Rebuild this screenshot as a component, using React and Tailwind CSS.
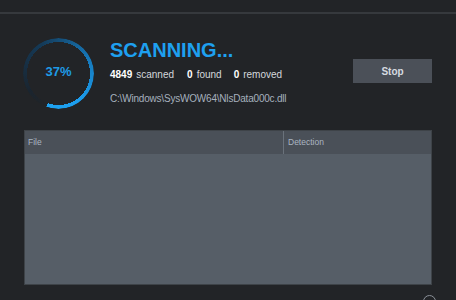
export default function App() {
  return (
    <div className="w-[456px] h-[300px] overflow-hidden bg-[#222427] relative" style={{ fontFamily: '"Liberation Sans", Arial, sans-serif' }}>
      <div className="h-[12px]" />
      <div className="h-[2px] bg-[#36393d]" />
      <div className="flex items-start pl-[23px] pr-[24px] mt-[24px]">
        <div className="relative w-[71px] h-[71px] shrink-0">
          <div className="absolute inset-0 rounded-full bg-[conic-gradient(from_201deg,transparent_0deg,#1a2530_40deg,#143a58_130deg,#1677b8_220deg,#1c9ded_300deg,#1ea2f0_359deg,transparent_359deg)] [mask:radial-gradient(farthest-side,transparent_calc(100%-4px),#000_calc(100%-4px))]" />
          <div className="absolute inset-0 flex items-center justify-center text-[13px] font-bold text-[#1e9be6] pb-[3px]">37%</div>
        </div>
        <div className="ml-[16px] flex flex-col pt-[1px]">
          <div className="text-[20px] leading-[23px] font-bold text-[#1ea0f0]">SCANNING...</div>
          <div className="flex items-baseline text-[10px] leading-[13px] mt-[6px] text-[#d4d8dc]">
            <span className="font-bold text-white">4849</span>
            <span className="ml-[4px]">scanned</span>
            <span className="ml-[13px] font-bold text-white">0</span>
            <span className="ml-[4px]">found</span>
            <span className="ml-[12px] font-bold text-white">0</span>
            <span className="ml-[4px]">removed</span>
          </div>
          <div className="text-[10px] leading-[13px] mt-[11px] tracking-[-0.2px] text-[#a6b1be]">C:\Windows\SysWOW64\NlsData000c.dll</div>
        </div>
        <div className="ml-auto mt-[21px] w-[79px] h-[24px] bg-[#4b5058] flex items-center justify-center text-[10px] font-bold text-[#d6dbe0]">Stop</div>
      </div>
      <div className="mx-[24px] mt-[21px] h-[155px] flex flex-col bg-[#565e67] border border-[#3e4348]">
        <div className="h-[23px] flex bg-[#4a5058] text-[8.5px] text-[#aab5c2]">
          <div className="w-[259px] flex items-center pl-[3px] border-r border-[#6a727b]">File</div>
          <div className="flex-1 flex items-center pl-[4px]">Detection</div>
        </div>
        <div className="flex-1" />
      </div>
      <div className="absolute left-[423px] top-[295px] w-[13px] h-[13px] rounded-full border border-[#8a9098]" />
    </div>
  );
}
